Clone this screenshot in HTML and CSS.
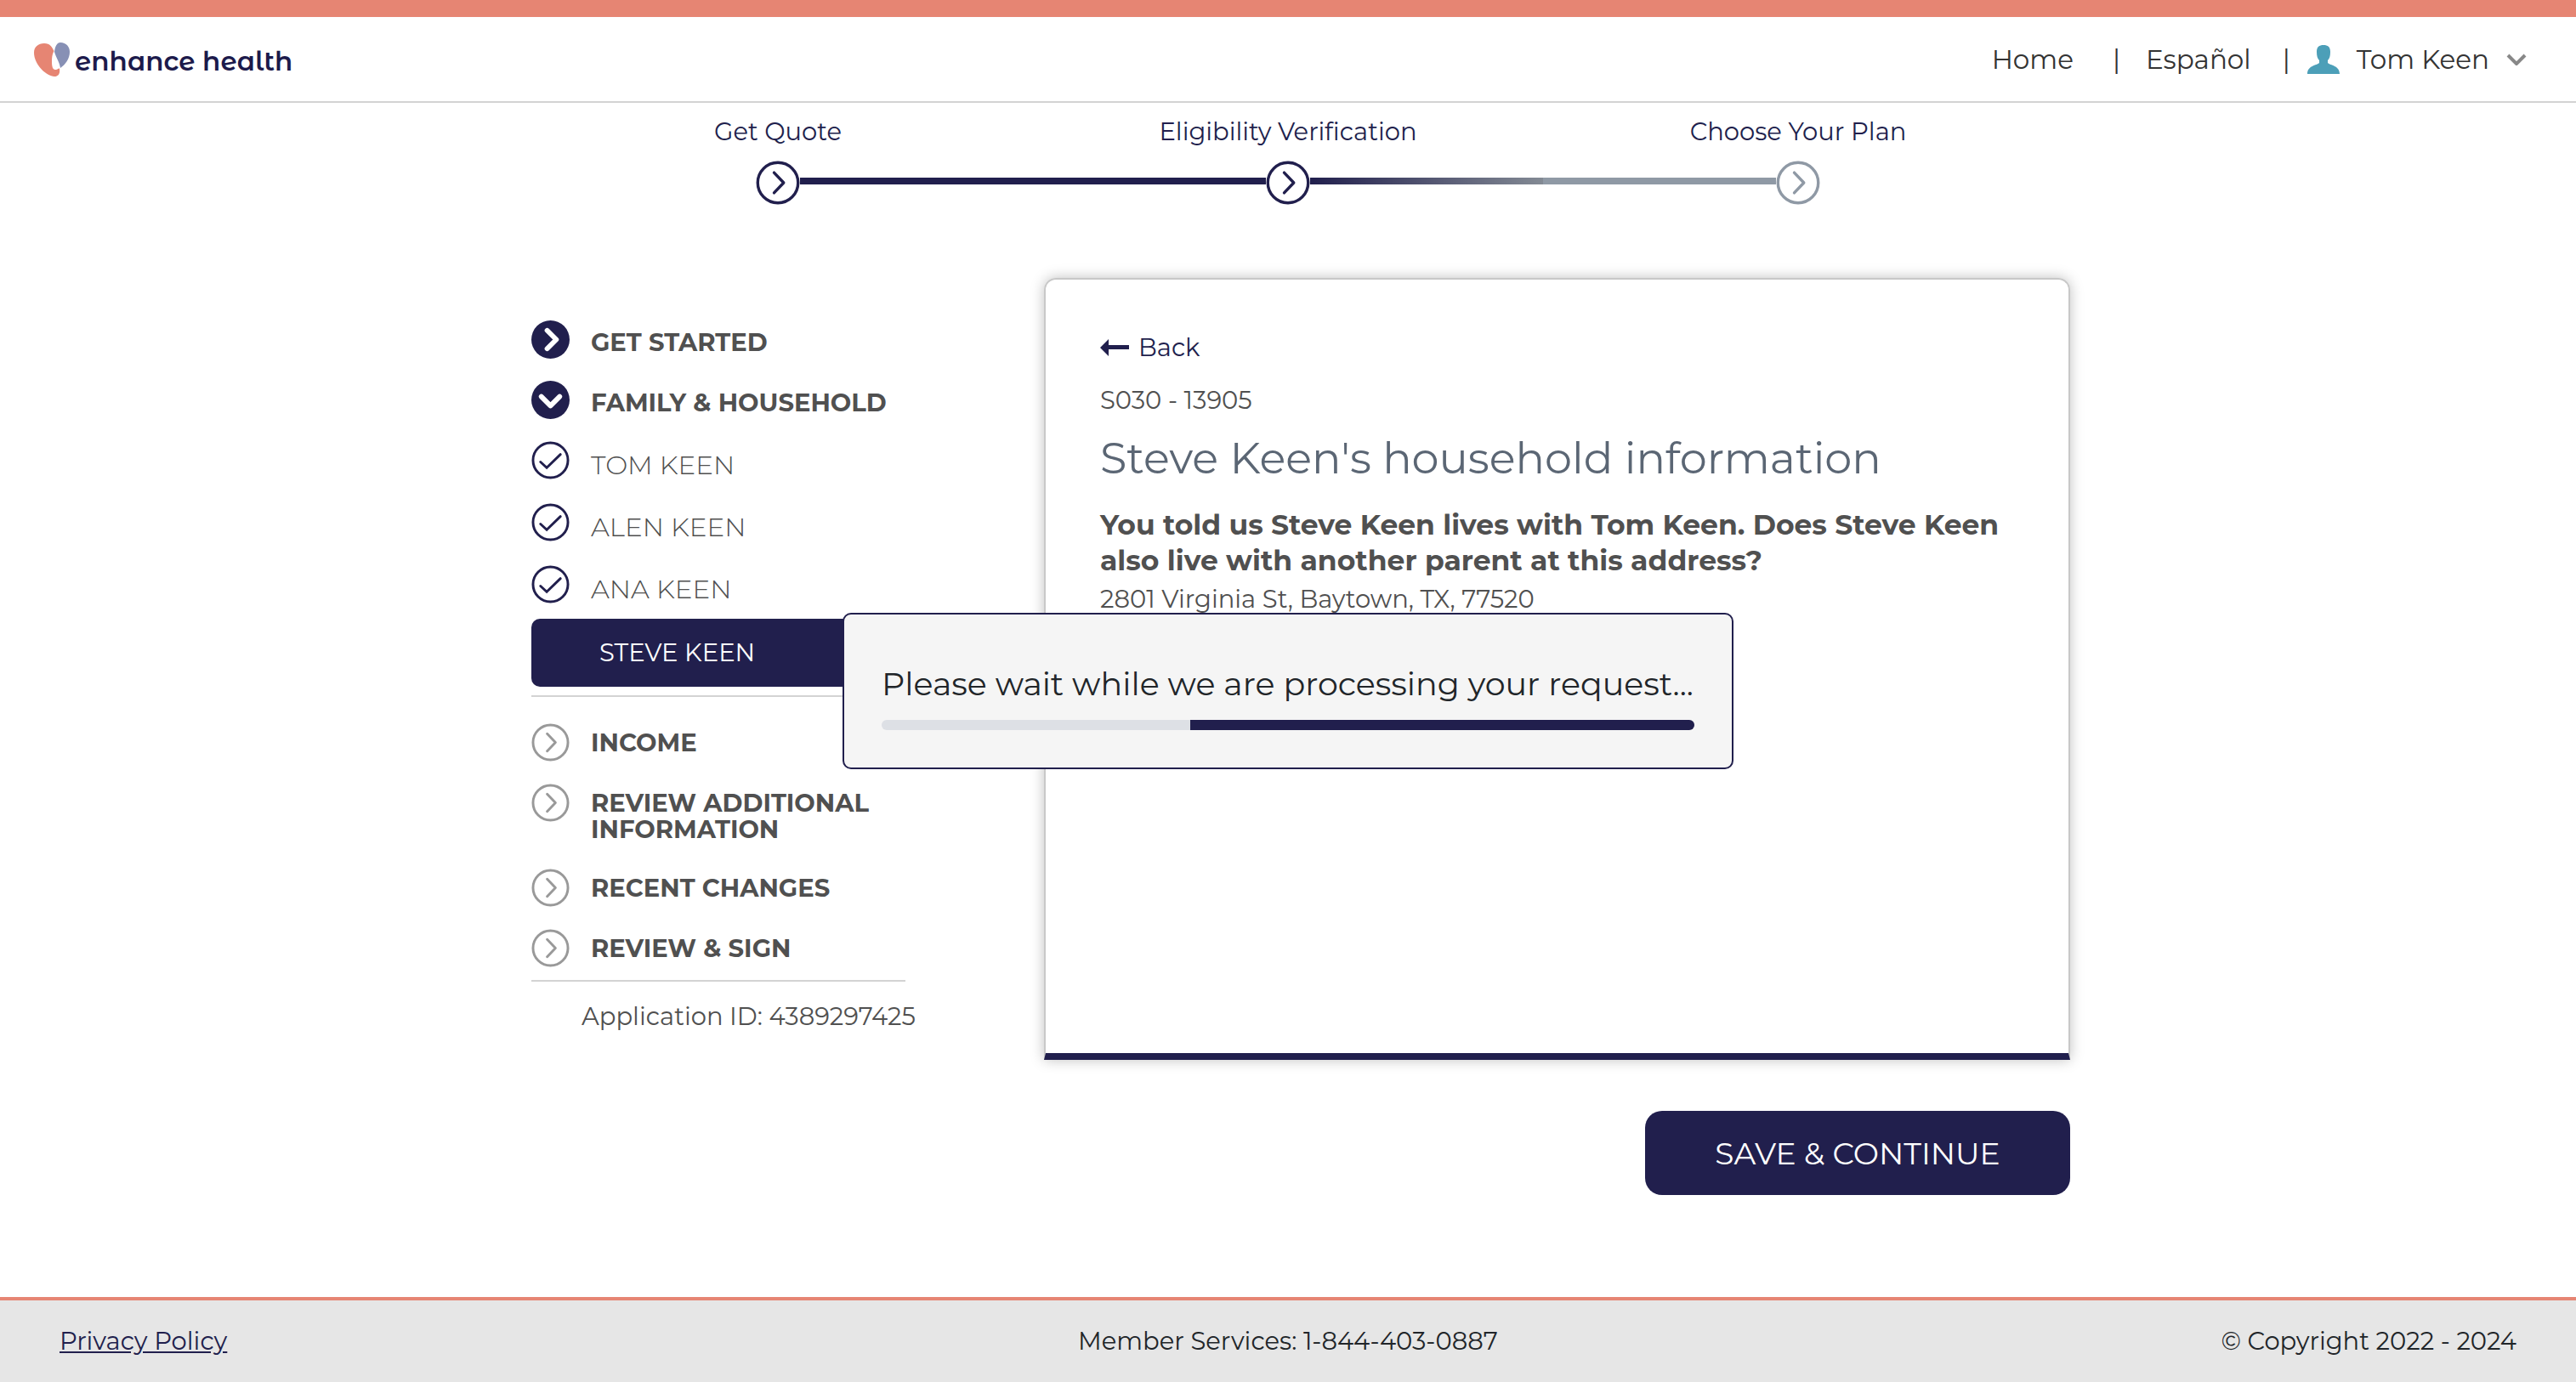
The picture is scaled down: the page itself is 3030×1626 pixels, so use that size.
FILE: index.html
```html
<!DOCTYPE html>
<html lang="en">
<head>
<meta charset="utf-8">
<meta name="viewport" content="width=device-width, initial-scale=1">
<title>Household information | enhance health</title>
<link rel="stylesheet" href="styles.css">
</head>
<body>
<svg class="sprite" aria-hidden="true">
  <symbol id="next" viewBox="0 0 46 46"><circle cx="23" cy="23" r="21" fill="none" stroke="currentColor" stroke-width="3"/><path d="M19 12.500 29 23 19 33.500" fill="none" stroke="currentColor" stroke-width="3" stroke-linecap="round" stroke-linejoin="round"/></symbol>
  <symbol id="next-solid" viewBox="0 0 46 46"><circle cx="23" cy="23" r="23" fill="currentColor"/><path d="M19 12 30 23 19 34" fill="none" stroke="#fff" stroke-width="6" stroke-linecap="round" stroke-linejoin="round"/></symbol>
  <symbol id="down-solid" viewBox="0 0 46 46"><circle cx="23" cy="23" r="23" fill="currentColor"/><path d="M12 19 23 30 34 19" fill="none" stroke="#fff" stroke-width="6" stroke-linecap="round" stroke-linejoin="round"/></symbol>
  <symbol id="done" viewBox="0 0 46 46"><circle cx="23" cy="23" r="21" fill="none" stroke="currentColor" stroke-width="3"/><path d="M11 25 18.500 32 35 16" fill="none" stroke="currentColor" stroke-width="3" stroke-linecap="round"/></symbol>
</svg>

<header class="site-header">
  <a class="brand" href="#">
    <svg class="brand-mark" viewBox="0 0 42 40" aria-hidden="true"><path fill="#e68573" d="M0 12C0 5 5 1 12 1s9 4 11.500 9C22 13 21 16 21 23c0 5 1 9 4 9 3 0 3-1.500 5-1.500 1 7-2 9.500-6 9.500C15 40 0 26 0 12z"/><path fill="#8790b5" d="M24 11C25 4 27 0 31 0c7 0 11 5 11 11 0 8-5 15-11 19-1-7-5-12-7-19z"/></svg>
    <span>enhance health</span>
  </a>
  <nav class="top-nav" aria-label="Account">
    <a href="#">Home</a>
    <span class="divider">|</span>
    <a href="#">Español</a>
    <span class="divider divider-tight">|</span>
    <button class="user" type="button">
      <svg class="user-icon" viewBox="0 0 38 34" aria-hidden="true"><path fill="#4c9fb8" d="M19 0c5 0 8 2 8 8 0 5-1 8-3 10v3c3 3 14 3 14 13H0c0-10 11-10 14-13v-3c-2-2-3-5-3-10 0-6 3-8 8-8z"/></svg>
      Tom Keen
      <svg class="user-caret" viewBox="0 0 24 14" aria-hidden="true"><path d="M2 2l10 10L22 2" fill="none" stroke="#888" stroke-width="4"/></svg>
    </button>
  </nav>
</header>

<ol class="steps">
  <li class="step"><span>Get Quote</span><svg class="step-icon"><use href="#next"/></svg></li>
  <li class="step step-current"><span>Eligibility Verification</span><svg class="step-icon"><use href="#next"/></svg></li>
  <li class="step step-todo"><span>Choose Your Plan</span><svg class="step-icon"><use href="#next"/></svg></li>
</ol>

<main class="layout">
  <nav class="sidebar" aria-label="Application sections">
    <ul class="sections">
      <li><a class="section" href="#"><svg class="icon"><use href="#next-solid"/></svg><span>GET STARTED</span></a></li>
      <li><a class="section" href="#"><svg class="icon"><use href="#down-solid"/></svg><span>FAMILY &amp; HOUSEHOLD</span></a></li>
    </ul>
    <ul class="members">
      <li><a class="member" href="#"><svg class="icon"><use href="#done"/></svg><span>TOM KEEN</span></a></li>
      <li><a class="member" href="#"><svg class="icon"><use href="#done"/></svg><span>ALEN KEEN</span></a></li>
      <li><a class="member" href="#"><svg class="icon"><use href="#done"/></svg><span>ANA KEEN</span></a></li>
    </ul>
    <a class="member-active" href="#" aria-current="page">STEVE KEEN</a>
    <ul class="sections sections-todo">
      <li><a class="section" href="#"><svg class="icon"><use href="#next"/></svg><span>INCOME</span></a></li>
      <li><a class="section" href="#"><svg class="icon"><use href="#next"/></svg><span>REVIEW ADDITIONAL INFORMATION</span></a></li>
      <li><a class="section" href="#"><svg class="icon"><use href="#next"/></svg><span>RECENT CHANGES</span></a></li>
      <li><a class="section" href="#"><svg class="icon"><use href="#next"/></svg><span>REVIEW &amp; SIGN</span></a></li>
    </ul>
    <p class="application-id">Application ID: 4389297425</p>
  </nav>

  <div class="content">
    <section class="card">
      <a class="back" href="#"><svg class="back-icon" viewBox="0 0 35 22" aria-hidden="true"><path fill="currentColor" d="M0 11 10 1v7h24v5H10v8z"/></svg>Back</a>
      <p class="screen-code">S030 - 13905</p>
      <h1>Steve Keen's household information</h1>
      <h2>You told us Steve Keen lives with Tom Keen. Does Steve Keen also live with another parent at this address?</h2>
      <p class="address">2801 Virginia St, Baytown, TX, 77520</p>
    </section>
    <button class="save" type="button">SAVE &amp; CONTINUE</button>
  </div>
</main>

<footer class="site-footer">
  <a href="#">Privacy Policy</a>
  <span>Member Services: 1-844-403-0887</span>
  <span class="copyright">© Copyright 2022 - 2024</span>
</footer>

<div class="loading" role="alertdialog" aria-labelledby="loading-text">
  <p id="loading-text">Please wait while we are processing your request...</p>
  <div class="bar"><div class="bar-fill"></div></div>
</div>
</body>
</html>
```
FILE: styles.css
```css
:root {
  --navy: #211f4d;
  --coral: #e68573;
  --text: #505050;
  --rule: #d3d3d3;
}

* { box-sizing: border-box; }

body {
  margin: 0;
  min-height: 100vh;
  display: flex;
  flex-direction: column;
  background: #fff;
  color: var(--text);
  font-family: Montserrat, Inter, sans-serif;
  font-size: 29px;
  font-weight: 400;
  line-height: 32px;
}

a { color: inherit; text-decoration: none; }
ul, ol { list-style: none; margin: 0; padding: 0; }
p, h1, h2 { margin: 0; }
button { font: inherit; color: inherit; border: 0; background: none; padding: 0; cursor: pointer; }
.sprite { position: absolute; width: 0; height: 0; }

.site-header {
  display: flex;
  align-items: center;
  justify-content: space-between;
  height: 121px;
  padding: 0 58px 0 40px;
  border-top: 20px solid var(--coral);
  border-bottom: 2px solid var(--rule);
  color: #333;
}
.brand {
  display: flex;
  align-items: center;
  gap: 6px;
  color: #1c1a4b;
  font-family: "Montserrat Alternates", Lato, sans-serif;
  font-size: 31px;
  font-weight: 600;
}
.brand span { padding-top: 4px; }
.brand-mark { width: 42px; height: 40px; }
.top-nav { display: flex; align-items: center; font-size: 31px; }
.divider { margin: 0 30px 0 46px; }
.divider-tight { margin: 0 20px 0 37px; }
.user { display: flex; align-items: center; gap: 20px; }
.user-icon { width: 38px; height: 34px; }
.user-caret { width: 24px; height: 14px; }

.steps {
  display: grid;
  grid-template-columns: repeat(3, 1fr);
  width: 1800px;
  max-width: 100%;
  margin: 18px auto 0;
  color: var(--navy);
}
.step {
  display: grid;
  grid-template-columns: 1fr 52px 1fr;
  align-items: center;
  row-gap: 18px;
  text-align: center;
}
.step span { grid-column: 1 / -1; }
.step-icon { grid-column: 2; grid-row: 2; width: 52px; height: 52px; }
.step::before, .step::after { content: ""; height: 8px; margin-bottom: 4px; grid-row: 2; }
.step::before { grid-column: 1; }
.step::after { grid-column: 3; }
.step:first-child::after, .step-current::before { background: var(--navy); }
.step-current::after { background: linear-gradient(90deg, var(--navy), #838a94); }
.step-todo::before { background: #8f99a5; }
.step-todo .step-icon { color: #8f99a5; }

.layout {
  display: grid;
  grid-template-columns: 480px minmax(0, 1207px);
  justify-content: space-between;
  width: 1840px;
  max-width: 100%;
  margin: 86px auto 0;
  padding-left: 30px;
}
.sidebar { padding-top: 50px; }
.sections { display: flex; flex-direction: column; gap: 26px; }
.section, .member { display: flex; gap: 25px; }
.section { font-weight: 700; line-height: 31px; }
.section span { padding-top: 10px; }
.member { font-size: 31px; font-weight: 300; }
.member span { padding-top: 12px; }
.icon { flex: none; width: 45px; height: 45px; color: var(--navy); }
.members { display: flex; flex-direction: column; gap: 28px; padding: 26px 0 18px; }
.member-active {
  display: block;
  width: 440px;
  padding: 24px 80px;
  border-radius: 10px;
  background: var(--navy);
  color: #fff;
}
.sections-todo {
  width: 440px;
  margin-top: 10px;
  padding: 31px 0 15px;
  border-top: 2px solid var(--rule);
  border-bottom: 2px solid var(--rule);
}
.sections-todo .icon { color: #999; }
.sections-todo span { padding: 7px 0 5px; }
.application-id { padding: 25px 0 0 59px; }

.content { display: flex; flex-direction: column; align-items: flex-end; gap: 60px; }
.card {
  width: 100%;
  min-height: 920px;
  padding: 64px 64px;
  border: 2px solid #c8c8c8;
  border-bottom: 8px solid var(--navy);
  border-radius: 14px 14px 0 0;
  box-shadow: 0 0 16px rgba(0, 0, 0, 0.25);
}
.back { display: flex; align-items: center; gap: 10px; color: var(--navy); }
.back-icon { width: 35px; height: 22px; }
.screen-code { margin-top: 30px; }
h1 { margin-top: 20px; color: #5b6674; font-size: 51px; line-height: 64px; font-weight: 400; }
h2 { margin-top: 25px; font-size: 33px; line-height: 42px; font-weight: 700; }
.address { margin-top: 9px; }
.save {
  width: 500px;
  height: 99px;
  border-radius: 20px;
  background: var(--navy);
  color: #fff;
  font-size: 36px;
}

.site-footer {
  display: grid;
  grid-template-columns: 1fr auto 1fr;
  align-items: center;
  height: 100px;
  margin-top: auto;
  padding: 0 70px;
  border-top: 4px solid var(--coral);
  background: #e6e6e6;
  color: #212529;
}
.site-footer a { justify-self: start; color: var(--navy); text-decoration: underline; }
.copyright { text-align: right; }

.loading {
  position: fixed;
  top: 50%;
  left: 50%;
  transform: translate(-50%, -50%);
  width: 1048px;
  max-width: 100%;
  padding: 54px 44px 44px;
  border: 2px solid var(--navy);
  border-radius: 10px;
  background: #f5f5f5;
  color: #212529;
  font-size: 38px;
  line-height: 56px;
}
.bar {
  display: flex;
  justify-content: flex-end;
  height: 12px;
  margin-top: 14px;
  border-radius: 6px;
  overflow: hidden;
  background: #dde0e5;
}
.bar-fill { width: 62%; background: var(--navy); }
```
